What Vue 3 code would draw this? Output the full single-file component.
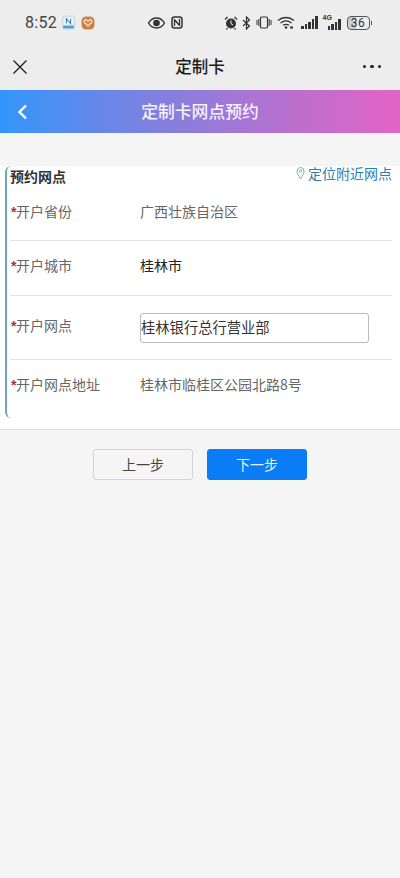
<script setup>
const bars1 = [3, 5, 7, 10, 13]
const bars2 = [4, 6, 8, 11]
</script>

<template>
  <div class="page">
    <header class="chrome">
      <div class="status">
        <div class="status-left">
          <span class="time">8:52</span>
          <svg class="app" width="15" height="15" viewBox="0 0 14 14">
            <rect x="0.500" y="0.500" width="13" height="13" rx="3" fill="#d5dfe5" />
            <rect x="2.500" y="2" width="9" height="7" fill="#f3f7f9" />
            <path d="M5 8V3.500l4 4.500V3.500" fill="none" stroke="#3b7fb5" stroke-width="1" />
            <rect x="2" y="10" width="10" height="2.500" fill="#4f9fd0" />
          </svg>
          <svg class="app" width="14" height="14" viewBox="0 0 14 14">
            <rect x="0.500" y="0.500" width="13" height="13" rx="4.500" fill="#c9824a" />
            <path d="M3.500 6.500 7 10l3.500-3.500a1.600 1.600 0 0 0-2.400-2.200L7 5.300 5.900 4.300a1.600 1.600 0 0 0-2.400 2.200z" fill="none" stroke="#fbeee0" stroke-width="1.100" />
          </svg>
        </div>
        <div class="status-mid">
          <svg width="17" height="12" viewBox="0 0 17 12">
            <path d="M.5 6C2.500 2.700 5.300 1 8.500 1s6 1.700 8 5c-2 3.300-4.800 5-8 5s-6-1.700-8-5z" fill="none" stroke="#333" stroke-width="1.400" />
            <circle cx="8.500" cy="6" r="3.300" fill="#333" />
          </svg>
          <svg width="12" height="13" viewBox="0 0 12 13">
            <rect x="1" y="1" width="10" height="11" rx="2.500" fill="none" stroke="#333" stroke-width="1.500" />
            <path d="M3.500 3v7M8.500 3v7M3.500 3.500l5 6" fill="none" stroke="#333" stroke-width="1.300" />
          </svg>
        </div>
        <div class="status-right">
          <svg class="i-alarm" width="14" height="14" viewBox="0 0 14 14">
            <circle cx="7" cy="7.500" r="5" fill="#333" />
            <path d="M7 4.500v3.200l2 1.200" fill="none" stroke="#eee" stroke-width="1" />
            <path d="M1 3.500 3.500 1M13 3.500 10.500 1M3.500 12 2.500 13.500M10.500 12l1 1.500" stroke="#333" stroke-width="1.300" />
          </svg>
          <svg class="i-bt" width="9" height="14" viewBox="0 0 9 14">
            <path d="M1 4l6.500 6L4.500 13V1l3 3L1 10" fill="none" stroke="#333" stroke-width="1.200" />
          </svg>
          <svg class="i-vib" width="16" height="13" viewBox="0 0 16 13">
            <rect x="4.500" y="1" width="7" height="11" rx="1.200" fill="none" stroke="#333" stroke-width="1.200" />
            <path d="M1 4v5M2.800 3v7M13.200 3v7M15 4v5" stroke="#333" stroke-width="1" />
          </svg>
          <svg class="i-wifi" width="18" height="13" viewBox="0 0 18 13">
            <path d="M1 4.500C5.800.5 12.200.5 17 4.500M3.500 7c3.300-2.600 7.700-2.600 11 0M6 9.300c2-1.300 4-1.300 6 0" fill="none" stroke="#333" stroke-width="1.300" />
            <circle cx="9" cy="11.500" r="1.300" fill="#333" />
            <rect x="13" y="10.500" width="3" height="2" fill="#333" />
          </svg>
          <div class="bars first">
            <i v-for="b in bars1" :key="b" :style="{ height: b + 'px' }"></i>
          </div>
          <div class="net">
            <span class="net-label">4G</span>
            <div class="bars">
              <i v-for="b in bars2" :key="b" :style="{ height: b + 'px' }"></i>
            </div>
          </div>
          <div class="battery"><span class="battery-text">36</span></div>
        </div>
      </div>
      <div class="nav">
        <svg class="close" width="14" height="14" viewBox="0 0 14 14">
          <path d="M.5.500l13 13M13.500.500l-13 13" stroke="#222" stroke-width="1.400" fill="none" />
        </svg>
        <span class="nav-title">定制卡</span>
        <div class="more"><i></i><i></i><i></i></div>
      </div>
    </header>

    <div class="banner">
      <svg class="back" width="11" height="16" viewBox="0 0 11 16">
        <path d="M9 1.500 2.500 8 9 14.500" fill="none" stroke="#fff" stroke-width="2.400" />
      </svg>
      <span class="banner-title">定制卡网点预约</span>
    </div>

    <section class="card">
      <div class="panel">
        <div class="panel-head">
          <span class="panel-title">预约网点</span>
          <span class="locate">
            <svg width="9" height="14" viewBox="0 0 9 14">
              <path d="M4.500 13C2.500 9.500 1 7.500 1 5a3.500 3.500 0 0 1 7 0c0 2.500-1.500 4.500-3.500 8z" fill="none" stroke="#6aa7bd" stroke-width="0.900" />
              <circle cx="4.500" cy="5" r="1.300" fill="none" stroke="#6aa7bd" stroke-width="0.800" />
            </svg>
            定位附近网点
          </span>
        </div>
        <div class="row row-1">
          <span class="label"><b>*</b>开户省份</span>
          <span class="value">广西壮族自治区</span>
        </div>
        <div class="row row-2">
          <span class="label"><b>*</b>开户城市</span>
          <span class="value dark">桂林市</span>
        </div>
        <div class="row row-3">
          <span class="label"><b>*</b>开户网点</span>
          <div class="input">桂林银行总行营业部</div>
        </div>
        <div class="row row-4">
          <span class="label"><b>*</b>开户网点地址</span>
          <span class="value">桂林市临桂区公园北路8号</span>
        </div>
      </div>
    </section>

    <div class="actions">
      <button class="btn prev">上一步</button>
      <button class="btn next">下一步</button>
    </div>
  </div>
</template>

<style>
html, body { margin: 0; background: #f5f5f5; }
</style>

<style scoped>
.page {
  width: 400px;
  height: 878px;
  overflow: hidden;
  background: #f5f5f5;
  font-family: "Noto Sans CJK SC", "Liberation Sans", sans-serif;
  font-size: 14px;
}
.chrome { height: 90px; background: #ededed; }
.status {
  height: 45px;
  display: flex;
  align-items: center;
  padding: 0 0 0 25px;
  color: #444;
}
.status-left { display: flex; align-items: center; width: 123px; }
.time { font-family: Roboto, sans-serif; font-size: 16px; letter-spacing: 0.3px; width: 36px; }
.app { margin-right: 5px; }
.status-mid { display: flex; align-items: center; gap: 6px; width: 76px; }
.status-right { display: flex; align-items: center; }
.i-alarm { margin-right: 4px; }
.i-bt { margin-right: 5px; }
.i-vib { margin-right: 5px; }
.bars { display: flex; align-items: flex-end; gap: 1px; height: 13px; }
.bars i { width: 2.500px; background: #333; display: block; }
.bars.first { margin: 0 5px 0 6px; }
.net { position: relative; width: 18px; height: 14px; display: flex; justify-content: flex-end; align-items: flex-end; }
.net-label { position: absolute; left: 0; top: -2px; font: 700 7px/8px "Liberation Sans", sans-serif; color: #333; }
.battery {
  width: 23px;
  height: 14px;
  box-sizing: border-box;
  margin-left: 6px;
  border: 1px solid #555;
  border-radius: 4px;
  background: linear-gradient(90deg, #cfcfcf 36%, transparent 36%);
  display: flex;
  align-items: center;
  justify-content: center;
  position: relative;
}
.battery::after {
  content: "";
  position: absolute;
  right: -3px;
  top: 4px;
  width: 1px;
  height: 4px;
  background: #555;
}
.battery-text { font: 12px/12px Roboto, sans-serif; color: #333; letter-spacing: 0.5px; }
.nav {
  height: 45px;
  display: flex;
  align-items: center;
  justify-content: space-between;
  padding: 0 19px 2px 13px;
  box-sizing: border-box;
  position: relative;
}
.close { display: block; }
.nav-title {
  position: absolute;
  left: 0;
  right: 0;
  top: 9px;
  text-align: center;
  font-size: 16.500px;
  line-height: 24px;
  font-weight: 500;
  color: #1b1b1b;
}
.more { display: flex; gap: 4px; }
.more i { width: 3.500px; height: 3.500px; border-radius: 50%; background: #222; display: block; }
.banner {
  height: 43px;
  padding-bottom: 2px;
  box-sizing: border-box;
  background: linear-gradient(90deg, #3396fb 0%, #7f80e0 38%, #b671cf 70%, #e264c5 100%);
  display: flex;
  align-items: center;
  justify-content: center;
  position: relative;
}
.back { position: absolute; left: 17px; top: 14px; }
.banner-title { font-size: 16.800px; font-weight: 500; color: #f4f2fb; line-height: 24px; }
.card {
  margin-top: 33px;
  height: 263px;
  background: #fff;
  border-bottom: 1px solid #dcdcdc;
  padding-left: 5px;
}
.panel {
  height: 252px;
  border-left: 2px solid #6ba7c1;
  border-radius: 6px;
  padding: 0 8px 0 3px;
  color: #666;
}
.panel-head {
  height: 22px;
  display: flex;
  justify-content: space-between;
  align-items: flex-start;
}
.panel-title { font-weight: 700; font-size: 14px; line-height: 20px; color: #333; }
.locate { display: flex; align-items: center; gap: 3px; color: #2b81b0; font-size: 14px; line-height: 14px; }
.row {
  display: grid;
  grid-template-columns: 130px 1fr;
  align-items: flex-start;
  border-bottom: 1px solid #e3e3e3;
  box-sizing: border-box;
}
.row-1 { height: 53px; padding-top: 13px; }
.row-2 { height: 55px; padding-top: 14px; }
.row-3 { height: 64px; padding-top: 17px; }
.row-3 .label { margin-top: 2px; }
.row-4 { height: 58px; padding-top: 14px; border-bottom: 0; }
.label, .value { line-height: 20px; }
.label { color: #666; white-space: nowrap; }
.label b { color: #a8323e; font-weight: 700; font-family: "Liberation Sans", sans-serif; margin: 0 -0.500px 0 1px; }
.value { color: #666; }
.value.dark { color: #222; }
.input {
  width: 229px;
  height: 30px;
  box-sizing: border-box;
  border: 1px solid #bbb;
  border-radius: 3px;
  font-size: 14.300px;
  line-height: 26px;
  color: #333;
  white-space: nowrap;
}
.actions { display: flex; justify-content: center; gap: 14px; margin-top: 19px; }
.btn {
  width: 100px;
  height: 31px;
  padding: 0 0 2px;
  box-sizing: border-box;
  border-radius: 3px;
  font: 14px/20px "Noto Sans CJK SC", sans-serif;
}
.prev { background: #f5f5f5; border: 1px solid #d4d4d4; color: #444; }
.next { background: #0a7cf5; border: 1px solid #0a7cf5; color: #e8f2fe; }
</style>
